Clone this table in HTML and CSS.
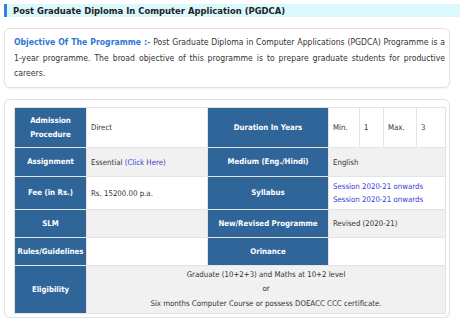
FILE: index.html
```html
<!DOCTYPE html>
<html>
<head>
<meta charset="utf-8">
<link rel="stylesheet" href="styles.css">
</head>
<body>
<div class="page">
  <h1 class="title">Post Graduate Diploma In Computer Application (PGDCA)</h1>
  <div class="card objective">
    <p><span class="label">Objective Of The Programme :-</span> Post Graduate Diploma in Computer Applications (PGDCA) Programme is a 1-year programme. The broad objective of this programme is to prepare graduate students for productive careers.</p>
  </div>
  <div class="card tablecard">
    <table class="info">
      <colgroup>
        <col class="c1"><col class="c2"><col class="c3"><col class="c4"><col class="c5"><col class="c6"><col class="c7">
      </colgroup>
      <tr class="r1 white">
        <th>Admission<br>Procedure</th>
        <td>Direct</td>
        <th>Duration In Years</th>
        <td>Min.</td>
        <td>1</td>
        <td>Max.</td>
        <td>3</td>
      </tr>
      <tr class="r2 grey">
        <th>Assignment</th>
        <td>Essential <a href="#">(Click Here)</a></td>
        <th>Medium (Eng./Hindi)</th>
        <td colspan="4">English</td>
      </tr>
      <tr class="r3 white">
        <th>Fee (in Rs.)</th>
        <td>Rs. 15200.00 p.a.</td>
        <th>Syllabus</th>
        <td colspan="4"><a href="#">Session 2020-21 onwards</a><br><a href="#">Session 2020-21 onwards</a></td>
      </tr>
      <tr class="r4 grey">
        <th>SLM</th>
        <td></td>
        <th>New/Revised Programme</th>
        <td colspan="4">Revised (2020-21)</td>
      </tr>
      <tr class="r5 white">
        <th>Rules/Guidelines</th>
        <td></td>
        <th>Orinance</th>
        <td colspan="4"></td>
      </tr>
      <tr class="r6 grey">
        <th>Eligibility</th>
        <td colspan="6" class="center">Graduate (10+2+3) and Maths at 10+2 level<br>or<br>Six months Computer Course or possess DOEACC CCC certificate.</td>
      </tr>
    </table>
  </div>
</div>
</body>
</html>
```

FILE: styles.css
```css
html, body {
  margin: 0;
  padding: 0;
  background: #fff;
}
body {
  font-family: "DejaVu Sans Condensed", "DejaVu Sans", Verdana, sans-serif;
  font-stretch: condensed;
  font-size: 7.8px;
  color: #333;
}
.page {
  padding: 4px 0 0 4px;
  width: 456px;
}
.title {
  margin: 0;
  height: 13px;
  line-height: 13px;
  background: #dbf8fd;
  border-left: 3px solid #2f86d8;
  padding-left: 6px;
  font-size: 9.4px;
  font-weight: bold;
  color: #222;
}
.card {
  width: 446px;
  box-sizing: border-box;
  border: 1px solid #e2e2e2;
  border-radius: 6px;
  box-shadow: 0 1px 2px rgba(0,0,0,0.06);
  background: #fff;
}
.objective {
  margin-top: 11px;
  height: 60px;
  padding: 6px 4px 0 9px;
}
.objective p {
  margin: 0;
  font-size: 8.6px;
  line-height: 15.5px;
  text-align: justify;
}
.label {
  color: #2d78d4;
  font-weight: bold;
}
.tablecard {
  margin-top: 11px;
  padding: 7px 4px 3px 9px;
}
.info {
  width: 431px;
  border-collapse: collapse;
  table-layout: fixed;
}
.c1 { width: 72px; }
.c2 { width: 121px; }
.c3 { width: 121px; }
.c4 { width: 31px; }
.c5 { width: 24px; }
.c6 { width: 33px; }
.c7 { width: 29px; }
.info th, .info td {
  border: 1px solid #e4e4e4;
  padding: 0 4px;
  vertical-align: middle;
}
.info th {
  background: #2f6598;
  color: #fff;
  font-weight: bold;
  text-align: center;
  line-height: 14px;
  padding: 0 1px;
}
.info td {
  text-align: left;
  line-height: 13px;
}
.white td { background: #fff; }
.grey td { background: #f1f1f1; }
.r1 { height: 40px; }
.r2 { height: 29px; }
.r3 { height: 33px; }
.r4 { height: 28px; }
.r5 { height: 28px; }
.r6 { height: 48px; }
.info a {
  color: #3b3bd4;
  text-decoration: none;
}
.info td.center {
  text-align: center;
  line-height: 14.5px;
}
```
